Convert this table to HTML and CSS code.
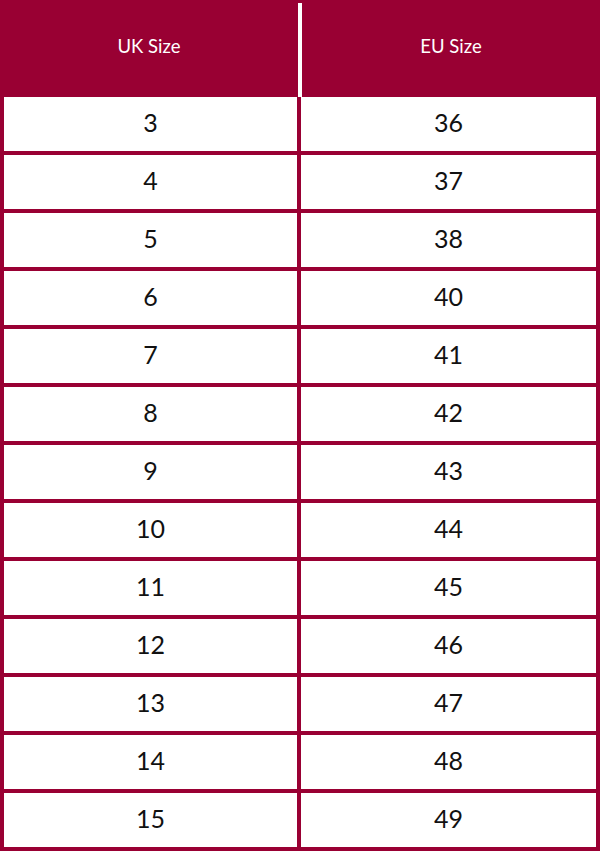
FILE: index.html
```html
<!DOCTYPE html>
<html lang="en">
<head>
<meta charset="utf-8">
<title>Size Chart</title>
<link rel="stylesheet" href="styles.css">
</head>
<body>
<div class="chart">
  <div class="head">
    <div class="hcell">UK Size</div>
    <div class="hdiv"></div>
    <div class="hcell">EU Size</div>
  </div>
  <div class="rows">
    <div class="cell">3</div><div class="cell">36</div>
    <div class="cell">4</div><div class="cell">37</div>
    <div class="cell">5</div><div class="cell">38</div>
    <div class="cell">6</div><div class="cell">40</div>
    <div class="cell">7</div><div class="cell">41</div>
    <div class="cell">8</div><div class="cell">42</div>
    <div class="cell">9</div><div class="cell">43</div>
    <div class="cell">10</div><div class="cell">44</div>
    <div class="cell">11</div><div class="cell">45</div>
    <div class="cell">12</div><div class="cell">46</div>
    <div class="cell">13</div><div class="cell">47</div>
    <div class="cell">14</div><div class="cell">48</div>
    <div class="cell">15</div><div class="cell">49</div>
  </div>
</div>
</body>
</html>
```
FILE: styles.css
```css
html, body {
  margin: 0;
  padding: 0;
  background: #ffffff;
}
.chart {
  width: 600px;
  height: 851px;
  background: #990033;
  font-family: "Lato", "Open Sans", sans-serif;
}
.head {
  display: flex;
  height: 97px;
}
.hcell {
  width: 298px;
  display: flex;
  align-items: center;
  justify-content: center;
  color: #ffffff;
  font-size: 18.5px;
  padding-bottom: 5px;
  box-sizing: border-box;
}
.hdiv {
  width: 4px;
  margin-top: 3px;
  background: #ffffff;
}
.rows {
  display: grid;
  grid-template-columns: 293px 295px;
  grid-auto-rows: 54px;
  gap: 4px;
  padding: 0 4px 4px 4px;
}
.cell {
  background: #ffffff;
  display: flex;
  align-items: center;
  justify-content: center;
  color: #111111;
  font-size: 25px;
  padding-bottom: 4px;
  box-sizing: border-box;
}
```
